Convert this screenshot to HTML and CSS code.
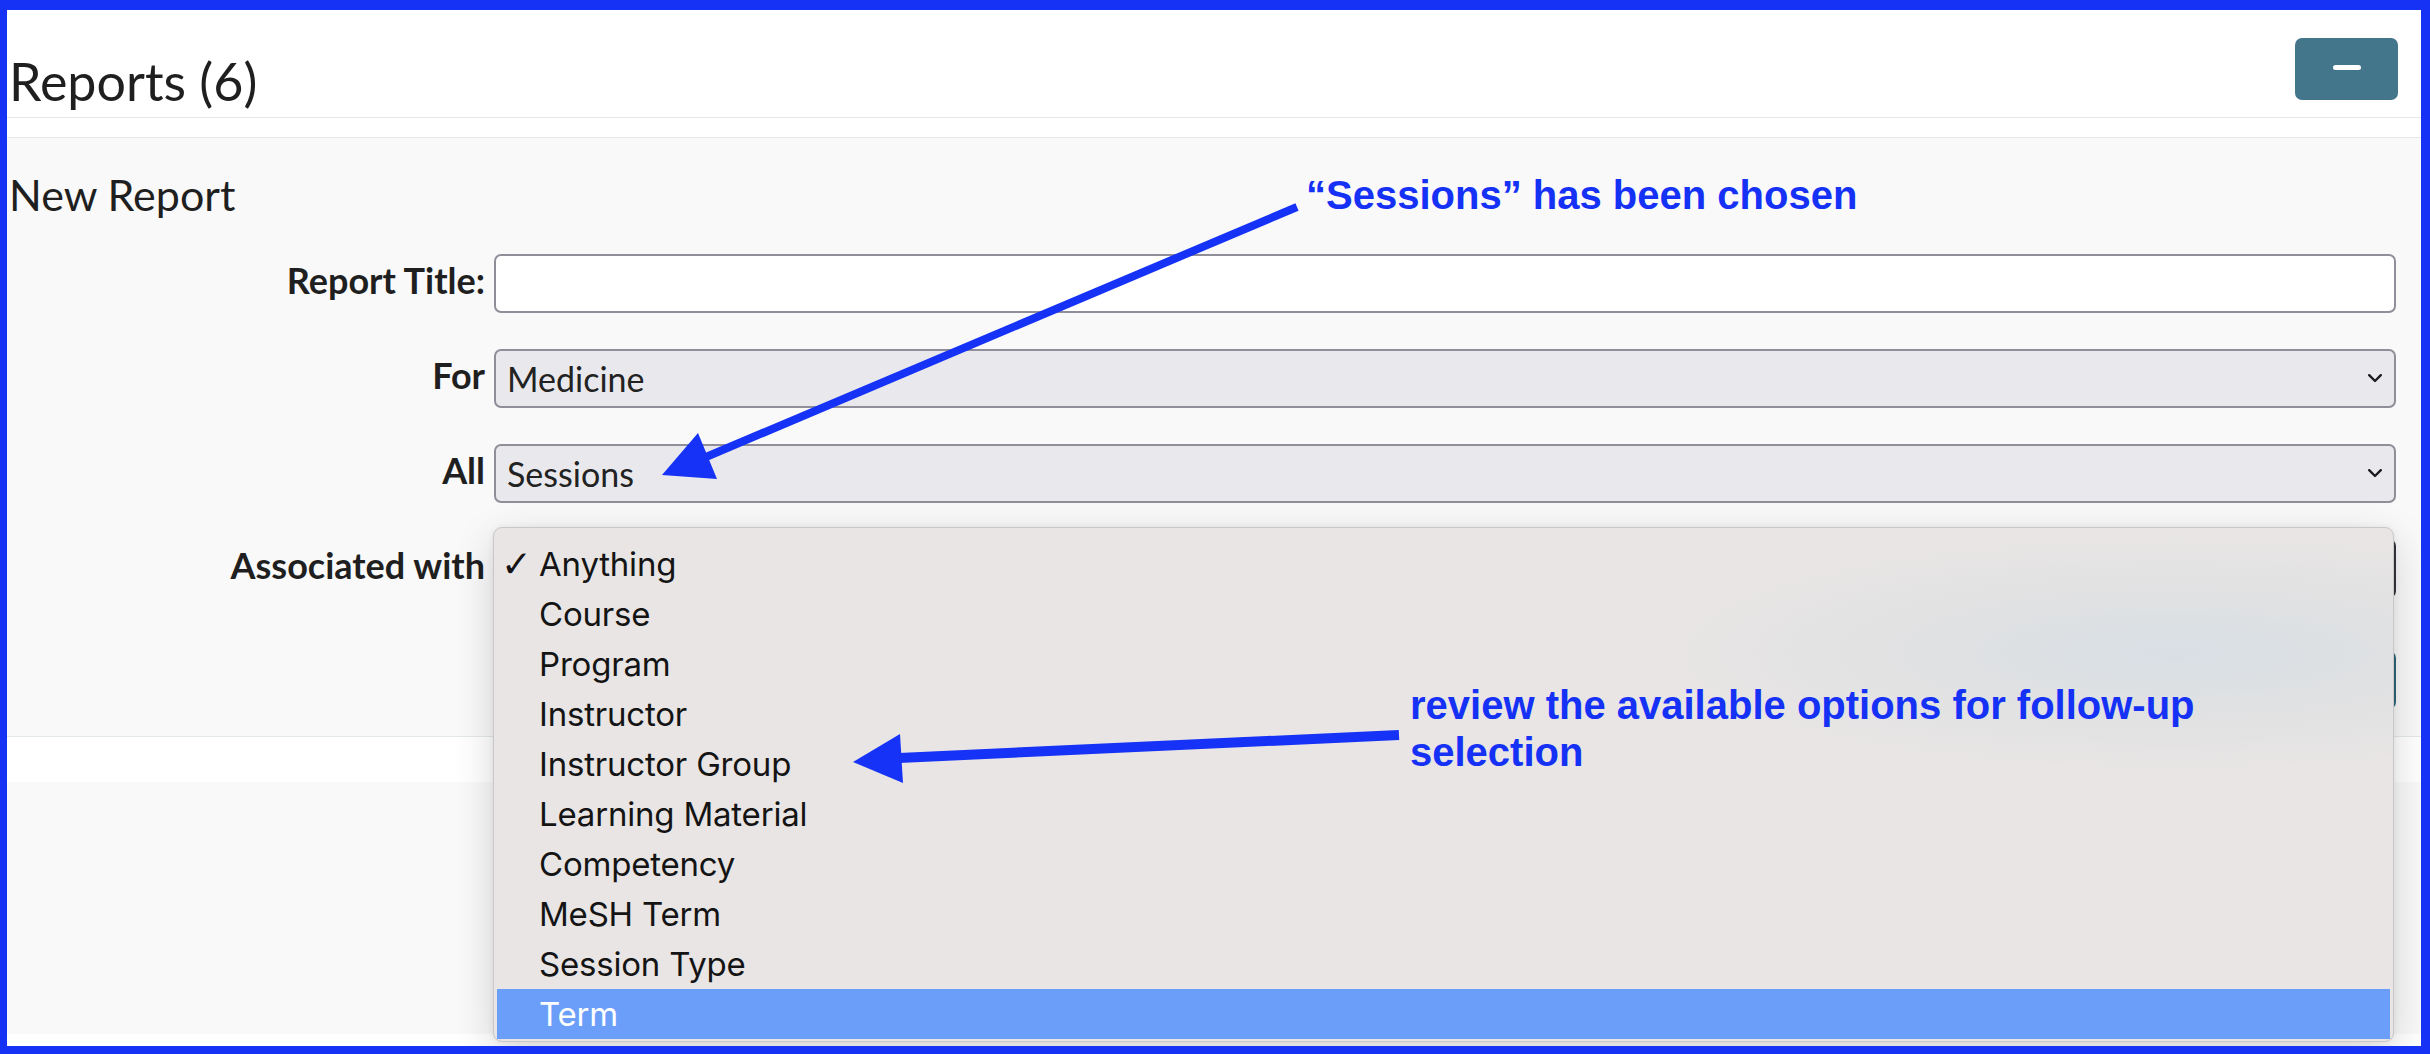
FILE: index.html
```html
<!DOCTYPE html>
<html lang="en">
<head>
<meta charset="utf-8">
<title>Reports</title>
<link rel="stylesheet" href="styles.css">
</head>
<body>
<div class="frame">
  <header class="head">
    <h2 class="title">Reports (6)</h2>
    <button class="collapse" type="button" aria-label="Collapse"><span class="bar"></span></button>
  </header>
  <div class="spacer"></div>
  <section class="new-report">
    <h3 class="subtitle">New Report</h3>
    <div class="form">
      <label class="lbl">Report Title:</label>
      <div class="field text"></div>

      <label class="lbl">For</label>
      <div class="field select"><span>Medicine</span><svg class="chev" viewBox="0 0 14 9" width="14" height="9"><polyline points="1.2,1.2 7,7 12.8,1.2"/></svg></div>

      <label class="lbl">All</label>
      <div class="field select"><span>Sessions</span><svg class="chev" viewBox="0 0 14 9" width="14" height="9"><polyline points="1.2,1.2 7,7 12.8,1.2"/></svg></div>

      <label class="lbl">Associated with</label>
      <div class="field select focused"></div>

      <div class="actions"><button class="done" type="button"></button></div>
    </div>
  </section>
  <div class="gap"></div>
  <section class="list"></section>

  <ul class="menu">
    <li class="item"><span class="check">✓</span><span class="opt">Anything</span></li>
    <li class="item"><span class="opt">Course</span></li>
    <li class="item"><span class="opt">Program</span></li>
    <li class="item"><span class="opt">Instructor</span></li>
    <li class="item"><span class="opt">Instructor Group</span></li>
    <li class="item"><span class="opt">Learning Material</span></li>
    <li class="item"><span class="opt">Competency</span></li>
    <li class="item"><span class="opt">MeSH Term</span></li>
    <li class="item"><span class="opt">Session Type</span></li>
    <li class="item active"><span class="opt">Term</span></li>
  </ul>

  <div class="note note1">“Sessions” has been chosen</div>
  <div class="note note2">review the available options for follow-up selection</div>

  <svg class="arrows" viewBox="7 10 2414 1036" width="2414" height="1036">
    <line x1="1297" y1="207" x2="706" y2="457" class="shaft" stroke-width="8"/>
    <polygon points="662,475 698,433 717,479" class="head"/>
    <line x1="1399" y1="735" x2="899" y2="758" class="shaft" stroke-width="10"/>
    <polygon points="853,762 900,734 903,783" class="head"/>
  </svg>
</div>
</body>
</html>
```

FILE: styles.css
```css
* { box-sizing: border-box; }

body {
  margin: 0;
  background: #ffffff;
}

.frame {
  position: relative;
  width: 2430px;
  height: 1054px;
  border-style: solid;
  border-color: #1632f5;
  border-width: 10px 9px 8px 7px;
  background: #ffffff;
  overflow: hidden;
  font-family: Lato, "Noto Sans", sans-serif;
  color: #1f1f1f;
}

.head {
  height: 108px;
  display: flex;
  justify-content: space-between;
  align-items: flex-start;
  border-bottom: 1px solid #e3e8e8;
}

.title {
  margin: 41px 0 0 2px;
  font-size: 52px;
  line-height: 60px;
  font-weight: 400;
}

.collapse {
  margin: 28px 23px 0 0;
  width: 103px;
  height: 62px;
  border: none;
  border-radius: 7px;
  background: #43758b;
  display: flex;
  align-items: center;
  justify-content: center;
  padding: 0 0 4px 0;
}

.collapse .bar {
  display: block;
  width: 28px;
  height: 5px;
  border-radius: 3px;
  background: #ffffff;
}

.spacer {
  height: 19px;
}

.new-report {
  background: #f9f9f9;
  border-top: 1px solid #e3e8e8;
  border-bottom: 1px solid #e3e8e8;
  padding: 0 25px 27px 2px;
}

.subtitle {
  margin: 32px 0 0 0;
  font-size: 43px;
  line-height: 50px;
  font-weight: 400;
}

.form {
  margin-top: 34px;
  display: grid;
  grid-template-columns: 476px 1fr;
  column-gap: 9px;
  row-gap: 36px;
  align-items: center;
}

.lbl {
  text-align: right;
  font-weight: 700;
  font-size: 36px;
  line-height: 42px;
  margin-bottom: 8px;
}

.field {
  height: 59px;
  border: 2px solid #8f8e99;
  border-radius: 7px;
}

.text {
  background: #ffffff;
}

.select {
  background: #e9e9ed;
  display: flex;
  align-items: center;
  justify-content: space-between;
  padding: 0 12px 0 11px;
  font-size: 34px;
  color: #222222;
}

.select.focused {
  border-color: #34343c;
}

.chev polyline {
  fill: none;
  stroke: #1d1d1f;
  stroke-width: 2.4;
  stroke-linecap: round;
  stroke-linejoin: round;
}

.actions {
  grid-column: 2;
  display: flex;
  justify-content: flex-end;
  margin-top: 17px;
}

.done {
  width: 150px;
  height: 58px;
  border: none;
  border-radius: 7px;
  background: #2f6579;
}

.gap {
  height: 45px;
}

.list {
  height: 252px;
  background: #f9f9f9;
}

.menu {
  position: absolute;
  left: 486px;
  top: 517px;
  width: 1901px;
  height: 515px;
  margin: 0;
  padding: 11px 3px 2px 3px;
  list-style: none;
  border: 1px solid #c9c7c7;
  border-radius: 9px;
  background:
    radial-gradient(ellipse 520px 120px at 1680px 125px, rgba(216, 223, 228, 1) 0%, rgba(220, 223, 226, 0.6) 50%, rgba(232, 229, 228, 0) 100%),
    #e8e5e4;
  box-shadow: 0 12px 40px rgba(0, 0, 0, 0.16), 0 0 6px rgba(0, 0, 0, 0.06);
  font-family: Inter, Roboto, sans-serif;
  font-size: 33px;
  color: #141414;
}

.item {
  position: relative;
  height: 50px;
  line-height: 50px;
  padding-left: 42px;
  letter-spacing: -0.2px;
}

.item .check {
  position: absolute;
  left: 4px;
  top: 1px;
  width: 30px;
  font-family: "DejaVu Sans", sans-serif;
  font-size: 37px;
  line-height: 50px;
}

.item.active {
  background: #6a9ef8;
  color: #ffffff;
}

.note {
  position: absolute;
  font-family: "Liberation Sans", Arial, sans-serif;
  font-weight: 700;
  font-size: 40px;
  line-height: 47px;
  color: #1431f5;
}

.note1 {
  left: 1299px;
  top: 162px;
  white-space: nowrap;
}

.note2 {
  left: 1403px;
  top: 672px;
  width: 800px;
}

.arrows {
  position: absolute;
  left: 0;
  top: 0;
  pointer-events: none;
}

.arrows .shaft {
  stroke: #1532f6;
  stroke-linecap: butt;
}

.arrows .head {
  fill: #1532f6;
}
```
